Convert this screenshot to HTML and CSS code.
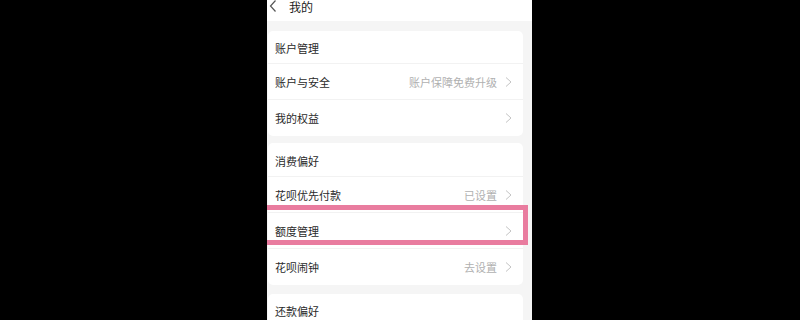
FILE: index.html
```html
<!DOCTYPE html>
<html lang="zh">
<head>
<meta charset="utf-8">
<link rel="stylesheet" href="styles.css">
</head>
<body>
<div class="screen">
  <div class="topbar">
    <svg class="back" width="8" height="12" viewBox="0 0 8 12"><path d="M6.5 0.5 L1.5 6 L6.5 11.5" fill="none" stroke="#555" stroke-width="1.2"/></svg>
    <span class="title">我的</span>
  </div>
  <div class="content">
    <div class="card">
      <div class="head">账户管理</div>
      <div class="row"><span class="label">账户与安全</span><span class="value">账户保障免费升级</span><svg class="chev" width="7" height="10" viewBox="0 0 7 10"><path d="M1 0.5 L6 5 L1 9.5" fill="none" stroke="#c4c4c4" stroke-width="1"/></svg></div>
      <div class="row"><span class="label">我的权益</span><span class="value"></span><svg class="chev" width="7" height="10" viewBox="0 0 7 10"><path d="M1 0.5 L6 5 L1 9.5" fill="none" stroke="#c4c4c4" stroke-width="1"/></svg></div>
    </div>
    <div class="card">
      <div class="head head2">消费偏好</div>
      <div class="row"><span class="label">花呗优先付款</span><span class="value">已设置</span><svg class="chev" width="7" height="10" viewBox="0 0 7 10"><path d="M1 0.5 L6 5 L1 9.5" fill="none" stroke="#c4c4c4" stroke-width="1"/></svg></div>
      <div class="row"><span class="label">额度管理</span><span class="value"></span><svg class="chev" width="7" height="10" viewBox="0 0 7 10"><path d="M1 0.5 L6 5 L1 9.5" fill="none" stroke="#c4c4c4" stroke-width="1"/></svg></div>
      <div class="row"><span class="label">花呗闹钟</span><span class="value">去设置</span><svg class="chev" width="7" height="10" viewBox="0 0 7 10"><path d="M1 0.5 L6 5 L1 9.5" fill="none" stroke="#c4c4c4" stroke-width="1"/></svg></div>
    </div>
    <div class="card card3">
      <div class="head">还款偏好</div>
    </div>
  </div>
  <div class="highlight"></div>
</div>
</body>
</html>
```
FILE: styles.css
```css
html, body {
  margin: 0;
  padding: 0;
  background: #000;
  height: 320px;
  overflow: hidden;
}
body {
  font-family: "Noto Sans CJK SC", "Noto Sans", sans-serif;
}
.screen {
  position: relative;
  margin-left: 267px;
  width: 265px;
  height: 320px;
  background: #f5f5f5;
  overflow: hidden;
}
.topbar {
  height: 21px;
  background: #fff;
  display: flex;
  align-items: flex-start;
}
.back {
  margin-left: 2px;
  margin-top: 0;
}
.title {
  margin-left: 12px;
  font-size: 12px;
  line-height: 14px;
  color: #222;
}
.content {
  padding-top: 10px;
  display: flex;
  flex-direction: column;
  gap: 7px;
}
.card {
  background: #fff;
  margin: 0 9px 0 1px;
  border-radius: 5px;
}
.card3 {
  margin-top: 2px;
}
.head {
  height: 33px;
  padding-left: 7px;
  display: flex;
  align-items: center;
  padding-top: 1px;
  box-sizing: border-box;
  font-size: 11px;
  color: #2a2a2a;
  border-bottom: 1px solid #f2f2f2;
}
.head2 {
  height: 34px;
  padding-top: 3px;
}
.row {
  height: 36px;
  padding: 0 11px 0 7px;
  display: flex;
  align-items: center;
  box-sizing: border-box;
  border-bottom: 1px solid #f2f2f2;
}
.row:last-child {
  border-bottom: none;
}
.label {
  font-size: 11px;
  color: #2a2a2a;
}
.value {
  margin-left: auto;
  font-size: 11px;
  color: #b0b0b0;
  margin-right: 8px;
}
.chev {
  flex: none;
}
.highlight {
  position: absolute;
  top: 205px;
  left: -6px;
  width: 257px;
  height: 30px;
  border: 5px solid #e97c9f;
}
```
